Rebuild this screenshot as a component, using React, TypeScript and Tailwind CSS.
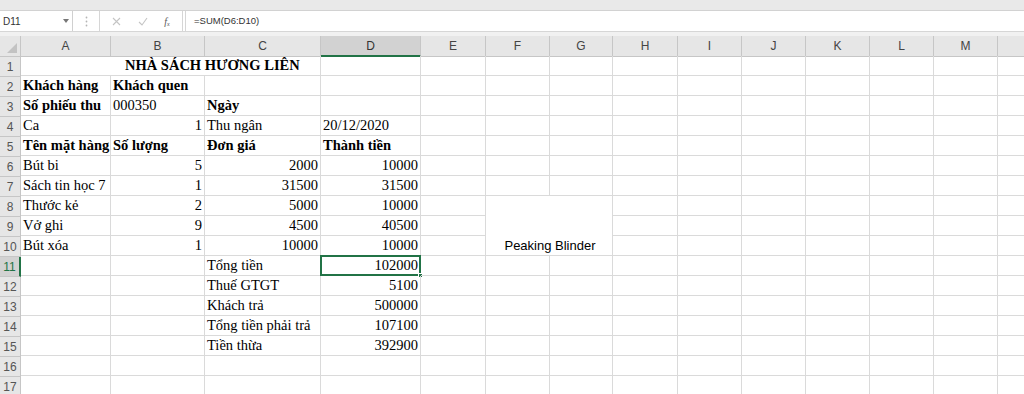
import React from "react";

type Cell = {
  v?: string;
  b?: boolean;
  r?: boolean;
  span?: string;
  pad?: string;
  sans?: boolean;
  sel?: boolean;
};

const COLS = ["A", "B", "C", "D", "E", "F", "G", "H", "I", "J", "K", "L", "M", "N"];

const data: Record<number, Cell[]> = {
  1: [{ v: "NHÀ SÁCH HƯƠNG LIÊN", b: true, span: "col-span-3", pad: "pl-[104px]" }, {}],
  2: [{ v: "Khách hàng", b: true }, { v: "Khách quen", b: true }, {}, {}],
  3: [{ v: "Số phiếu thu", b: true }, { v: "000350" }, { v: "Ngày", b: true }, {}],
  4: [{ v: "Ca" }, { v: "1", r: true }, { v: "Thu ngân" }, { v: "20/12/2020" }],
  5: [{ v: "Tên mặt hàng", b: true }, { v: "Số lượng", b: true }, { v: "Đơn giá", b: true }, { v: "Thành tiền", b: true }],
  6: [{ v: "Bút bi" }, { v: "5", r: true }, { v: "2000", r: true }, { v: "10000", r: true }],
  7: [{ v: "Sách tin học 7" }, { v: "1", r: true }, { v: "31500", r: true }, { v: "31500", r: true }],
  8: [{ v: "Thước kẻ" }, { v: "2", r: true }, { v: "5000", r: true }, { v: "10000", r: true }],
  9: [{ v: "Vở ghi" }, { v: "9", r: true }, { v: "4500", r: true }, { v: "40500", r: true }],
  10: [{ v: "Bút xóa" }, { v: "1", r: true }, { v: "10000", r: true }, { v: "10000", r: true }],
  11: [{}, {}, { v: "Tổng tiền" }, { v: "102000", r: true, sel: true }],
  12: [{}, {}, { v: "Thuế GTGT" }, { v: "5100", r: true }],
  13: [{}, {}, { v: "Khách trả" }, { v: "500000", r: true }],
  14: [{}, {}, { v: "Tổng tiền phải trả" }, { v: "107100", r: true }],
  15: [{}, {}, { v: "Tiền thừa" }, { v: "392900", r: true }],
};

function buildRow(n: number): Cell[] {
  const base = data[n] ? [...data[n]] : [{}, {}, {}, {}];
  const used = base.reduce((s, c) => s + (c.span === "col-span-3" ? 3 : 1), 0);
  const rest: Cell[] = [];
  for (let i = used; i < COLS.length; i++) {
    const col = COLS[i];
    if (n >= 8 && n <= 10 && (col === "F" || col === "G")) {
      if (n === 8 && col === "F")
        rest.push({ v: "Peaking Blinder", sans: true, span: "col-span-2 row-span-3" });
      continue;
    }
    rest.push({});
  }
  return [...base, ...rest];
}

const FxBar = () => (
  <div className="flex h-[21px] items-stretch bg-white border-b border-[#d6d6d6]">
    <div className="flex w-[73px] items-center justify-between border-r border-[#d0d0d0] pl-[3px] pr-[3px]">
      <span className="text-[10px] text-[#333]" style={{ fontFamily: "'Liberation Sans', sans-serif" }}>D11</span>
      <svg width="6" height="4" viewBox="0 0 6 4"><path d="M0 0h6L3 4z" fill="#777" /></svg>
    </div>
    <div className="flex w-[26px] items-center justify-center">
      <svg width="3" height="11" viewBox="0 0 3 11">
        <circle cx="1.5" cy="1.5" r="0.9" fill="#b5b5b5" />
        <circle cx="1.5" cy="5.5" r="0.9" fill="#b5b5b5" />
        <circle cx="1.5" cy="9.5" r="0.9" fill="#b5b5b5" />
      </svg>
    </div>
    <div className="flex w-[84px] items-center justify-around border-x border-[#d6d6d6] px-[4px]">
      <svg width="9" height="9" viewBox="0 0 9 9"><path d="M1 1l7 7M8 1L1 8" stroke="#c4c4c4" strokeWidth="1.1" /></svg>
      <svg width="10" height="9" viewBox="0 0 10 9"><path d="M1 5l3 3 5-7" stroke="#c4c4c4" strokeWidth="1.1" fill="none" /></svg>
      <span className="text-[10px] italic text-[#555]" style={{ fontFamily: "'Liberation Serif', serif" }}>f<sub className="text-[6px]">x</sub></span>
    </div>
    <div className="ml-[2px] flex flex-1 items-center border-l border-[#d6d6d6] pl-[8px]">
      <span className="text-[9.5px] text-[#333]" style={{ fontFamily: "'Liberation Sans', sans-serif" }}>=SUM(D6:D10)</span>
    </div>
  </div>
);

export default function App() {
  const rows = Array.from({ length: 17 }, (_, i) => i + 1);
  const gridCols =
    "grid grid-cols-[90px_94px_116px_100px_65px_64px_63px_65px_64px_64px_64px_64px_64px_64px] auto-rows-[20px]";
  return (
    <div className="h-[394px] w-[1024px] overflow-hidden bg-white">
      <div className="h-[11px] bg-[#e9e9e9] border-b border-[#d2d2d2]" />
      <FxBar />
      <div className="h-[4px] bg-[#f1f1f1]" />
      <div className="flex">
        <div className="w-[21px] shrink-0">
          <div className="relative h-[21px] bg-[#e6e6e6] border-r border-b border-[#c6c6c6]">
            <svg className="absolute right-[3px] bottom-[3px]" width="10" height="10" viewBox="0 0 10 10">
              <path d="M10 0V10H0z" fill="#c3c3c3" />
            </svg>
          </div>
          {rows.map((n) => (
            <div
              key={n}
              className={
                n === 11
                  ? "flex h-[20px] items-center justify-center bg-[#d2d2d2] border-r-2 border-r-[#217346] border-b border-b-[#c6c6c6] text-[12px] text-[#217346]"
                  : "flex h-[20px] items-center justify-center bg-[#e6e6e6] border-r border-b border-[#c6c6c6] text-[12px] text-[#555]"
              }
              style={{ fontFamily: "'Liberation Sans', sans-serif" }}
            >
              {n}
            </div>
          ))}
        </div>
        <div className="flex-1 overflow-hidden">
          <div className={gridCols} style={{ fontFamily: "'Liberation Sans', sans-serif" }}>
            {COLS.map((c) => (
              <div
                key={c}
                className={
                  c === "D"
                    ? "flex h-[21px] items-center justify-center bg-[#d2d2d2] border-r border-[#c6c6c6] border-b-2 border-b-[#217346] text-[12px] text-[#333]"
                    : "flex h-[21px] items-center justify-center bg-[#e6e6e6] border-r border-b border-[#c6c6c6] text-[12px] text-[#444]"
                }
              >
                {c === "N" ? "" : c}
              </div>
            ))}
          </div>
          <div className={gridCols}>
            {rows.map((n) =>
              buildRow(n).map((cell, i) => (
                <div
                  key={n + "-" + i}
                  className={[
                    "relative flex whitespace-nowrap border-r border-b border-[#dadada] text-black",
                    cell.span ?? "",
                    cell.sans ? "items-end justify-center pb-[1px] text-[13px] leading-[17px]" : "items-center text-[14.5px] leading-[19px]",
                    cell.r ? "justify-end pr-[2px]" : "pl-[2px]",
                    cell.b ? "font-bold" : "",
                    cell.pad ?? "",
                  ].join(" ")}
                  style={{
                    fontFamily: cell.sans
                      ? "'Liberation Sans', Arial, sans-serif"
                      : "'Liberation Serif', 'Times New Roman', serif",
                  }}
                >
                  {cell.v}
                  {cell.sel && (
                    <div className="absolute -left-[1px] -top-[1px] -right-[1px] -bottom-[1px] border-2 border-[#217346]">
                      <div className="absolute -right-[4px] -bottom-[4px] h-[5px] w-[5px] bg-[#217346] border border-white" />
                    </div>
                  )}
                </div>
              ))
            )}
          </div>
        </div>
      </div>
    </div>
  );
}
